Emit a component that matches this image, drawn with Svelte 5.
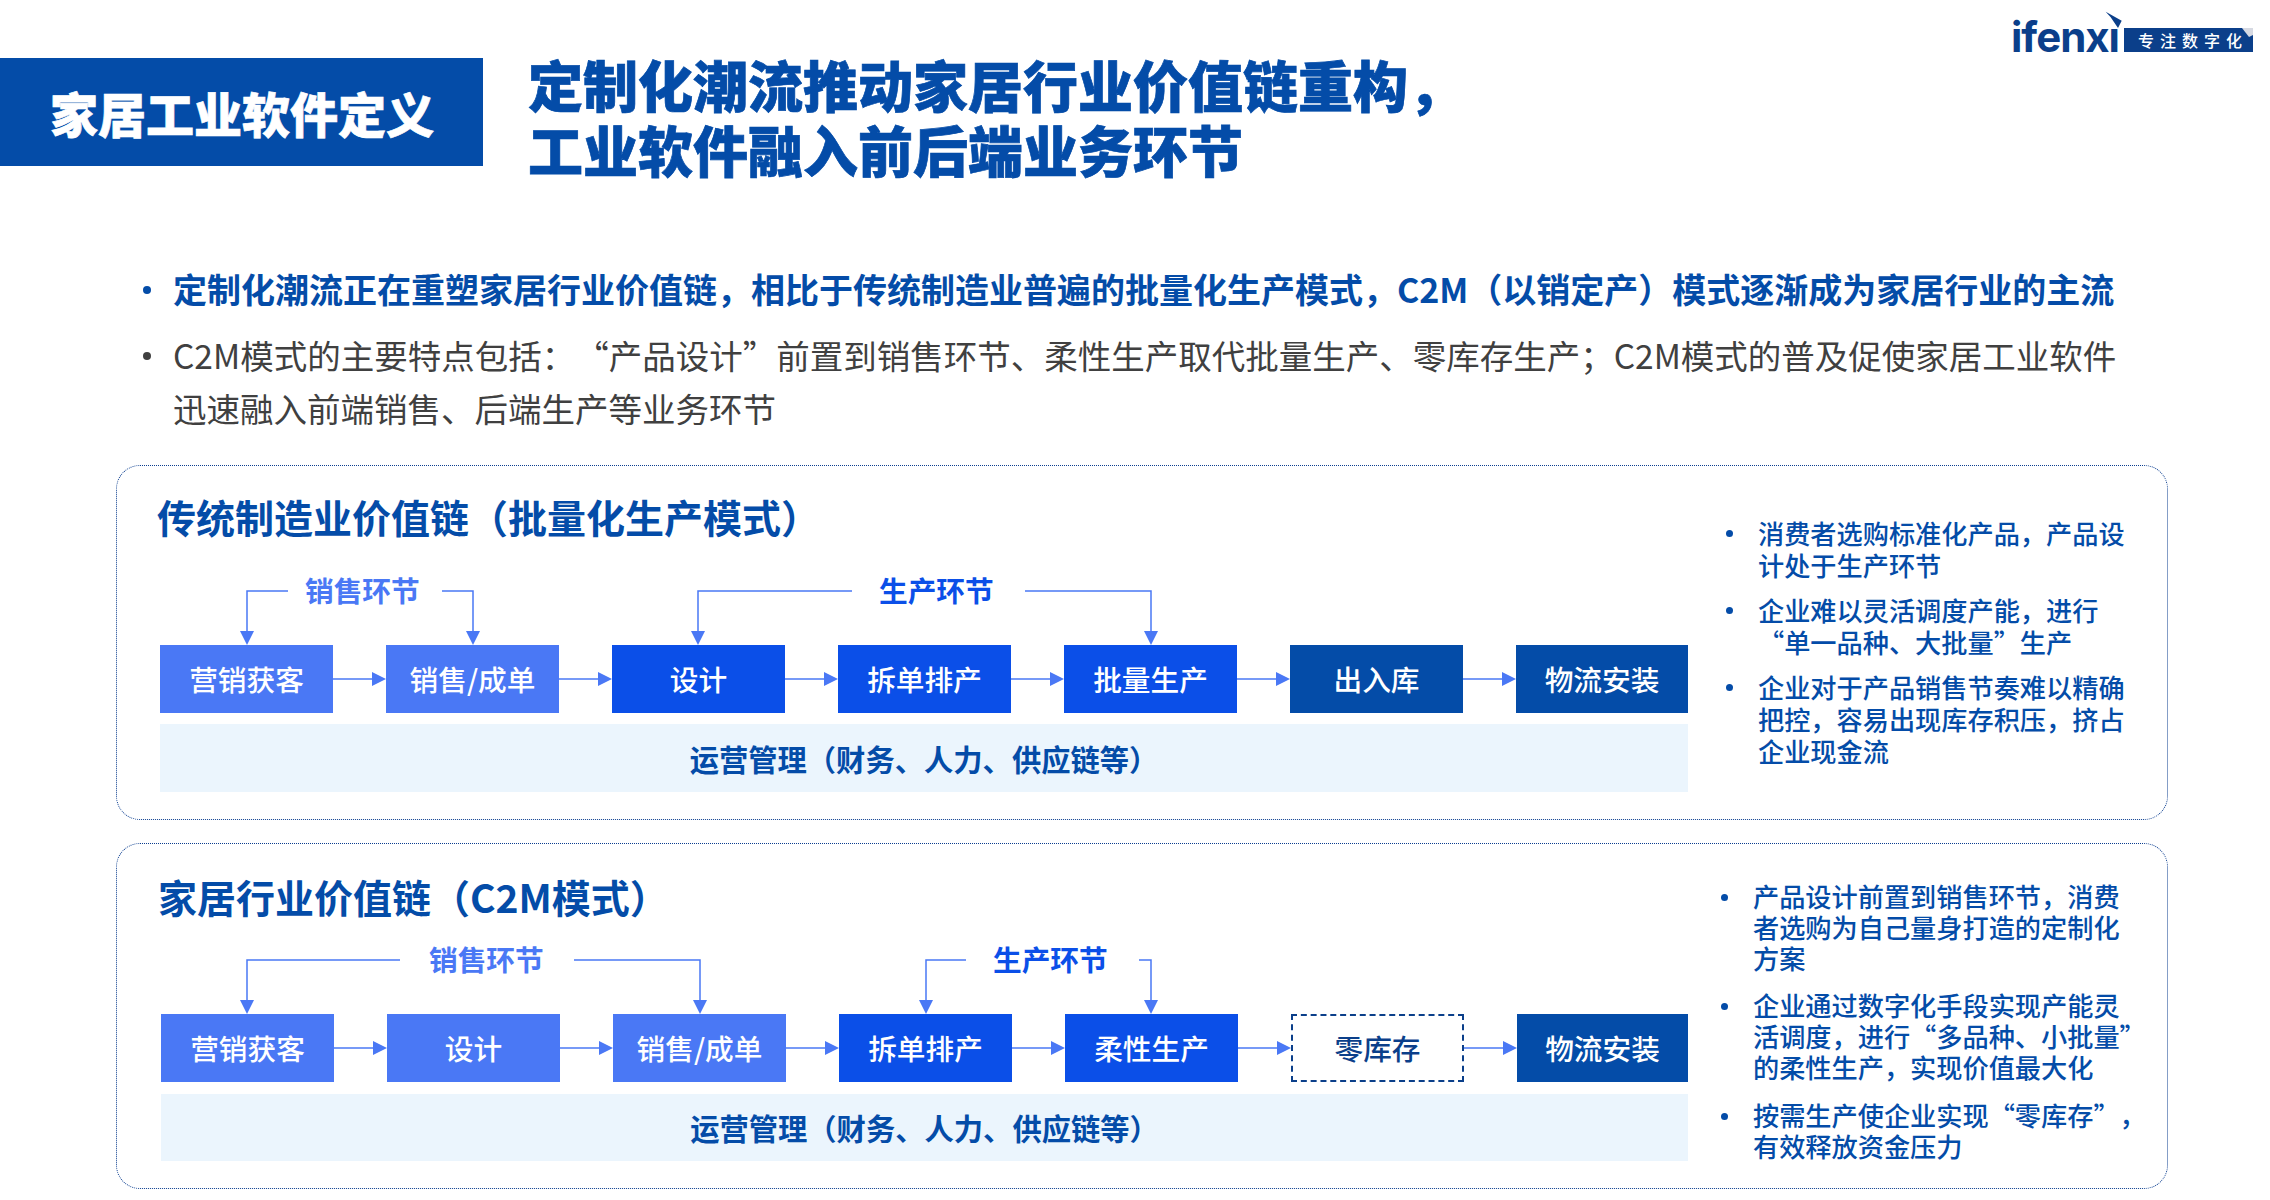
<script>
  const cards = [
    {
      cls: 'first',
      title: '传统制造业价值链（批量化生产模式）',
      w: 1528,
      brackets: [
        { path: 'M128 16H87V60 M282 16H313V60', tips: [87, 313], label: '销售环节', x: 145, cls: 'light' },
        { path: 'M692 16H538V60 M865 16H991V60', tips: [538, 991], label: '生产环节', x: 719, cls: 'mid' }
      ],
      boxes: [
        ['营销获客', 'light'], ['销售/成单', 'light'], ['设计', 'mid'], ['拆单排产', 'mid'],
        ['批量生产', 'mid'], ['出入库', 'dark'], ['物流安装', 'dark']
      ],
      notes: [
        ['消费者选购标准化产品，产品设', '计处于生产环节'],
        ['企业难以灵活调度产能，进行', '“单一品种、大批量”生产'],
        ['企业对于产品销售节奏难以精确', '把控，容易出现库存积压，挤占', '企业现金流']
      ]
    },
    {
      cls: 'second',
      title: '家居行业价值链（C2M模式）',
      w: 1527,
      brackets: [
        { path: 'M239 16H86V60 M413 16H539V60', tips: [86, 539], label: '销售环节', x: 268, cls: 'light' },
        { path: 'M805 16H765V60 M978 16H990V60', tips: [765, 990], label: '生产环节', x: 832, cls: 'mid' }
      ],
      boxes: [
        ['营销获客', 'light'], ['设计', 'light'], ['销售/成单', 'light'], ['拆单排产', 'mid'],
        ['柔性生产', 'mid'], ['零库存', 'dashed'], ['物流安装', 'dark']
      ],
      notes: [
        ['产品设计前置到销售环节，消费', '者选购为自己量身打造的定制化', '方案'],
        ['企业通过数字化手段实现产能灵', '活调度，进行“多品种、小批量”', '的柔性生产，实现价值最大化'],
        ['按需生产使企业实现“零库存”，', '有效释放资金压力']
      ]
    }
  ];
</script>

<div class="page">
  <header class="head">
    <div class="tag">家居工业软件定义</div>
    <h1 class="title">定制化潮流推动家居行业价值链重构，<br />工业软件融入前后端业务环节</h1>
    <svg class="logo" width="240" height="44" viewBox="0 0 240 44" aria-label="ifenxi 专注数字化">
      <text x="-2" y="42" class="logo-word" textLength="109" lengthAdjust="spacing">ifenxı</text>
      <polygon points="92.7,1.7 108.7,10.7 105,18 97.7,7.3" fill="#0b3f8a" />
      <rect x="111" y="18" width="129" height="24" fill="#0b3f8a" />
      <polygon points="229,18 240,18 240,25 236,27" fill="#d6d9e2" />
      <text x="125" y="37" class="logo-sub">专注数字化</text>
    </svg>
  </header>

  <ul class="points">
    <li class="strong">定制化潮流正在重塑家居行业价值链，相比于传统制造业普遍的批量化生产模式，C2M（以销定产）模式逐渐成为家居行业的主流</li>
    <li>C2M模式的主要特点包括：“产品设计”前置到销售环节、柔性生产取代批量生产、零库存生产；C2M模式的普及促使家居工业软件<br />迅速融入前端销售、后端生产等业务环节</li>
  </ul>

  {#each cards as card}
    <section class="card {card.cls}">
      <div class="chain">
        <h2>{card.title}</h2>
        <svg class="brackets" width={card.w} height="70" viewBox="0 0 {card.w} 70">
          {#each card.brackets as b}
            <path d={b.path} fill="none" stroke="#4a78f5" stroke-width="1.5" />
            {#each b.tips as t}
              <polygon points="{t - 7},56 {t + 7},56 {t},70" fill="#4a78f5" />
            {/each}
            <text x={b.x} y="27" class="bracket-label {b.cls}">{b.label}</text>
          {/each}
        </svg>
        <div class="flow">
          {#each card.boxes as box, i}
            {#if i > 0}
              <svg class="link" width="53" height="14" viewBox="0 0 53 14">
                <path d="M0 7H40" stroke="#4a78f5" stroke-width="1.5" />
                <polygon points="39,0 53,7 39,14" fill="#4a78f5" />
              </svg>
            {/if}
            <div class="box {box[1]}">{box[0]}</div>
          {/each}
        </div>
        <div class="ops">运营管理（财务、人力、供应链等）</div>
      </div>
      <ul class="notes">
        {#each card.notes as note}
          <li>{#each note as line}<span>{line}</span>{/each}</li>
        {/each}
      </ul>
    </section>
  {/each}
</div>

<style>
  :global(body) {
    margin: 0;
    background: #fff;
  }
  .page {
    width: 2270px;
    height: 1200px;
    overflow: hidden;
    background: #fff;
    font-family: "Noto Sans CJK SC", "Noto Sans", sans-serif;
    color: #044ca8;
    text-spacing-trim: space-all;
  }
  .head {
    display: flex;
    align-items: flex-start;
    height: 185px;
  }
  .tag {
    flex: 0 0 auto;
    box-sizing: border-box;
    width: 483px;
    height: 108px;
    margin-top: 58px;
    padding-left: 50px;
    background: #044ca8;
    color: #fff;
    font-size: 48px;
    font-weight: 900;
    line-height: 108px;
    -webkit-text-stroke: 0.7px #fff;
  }
  .title {
    margin: 51px 0 0 45px;
    color: #044ca8;
    font-size: 55px;
    font-weight: 900;
    line-height: 65px;
    -webkit-text-stroke: 0.7px #044ca8;
  }
  .logo {
    flex: 0 0 auto;
    margin: 10px 17px 0 auto;
    overflow: visible;
  }
  .logo-word {
    font-family: Inter, sans-serif;
    font-size: 42px;
    font-weight: 700;
    fill: #0b3f8a;
  }
  .logo-sub {
    font-size: 16px;
    font-weight: 500;
    letter-spacing: 6px;
    fill: #fff;
  }
  ul {
    list-style: none;
    margin: 0;
    padding: 0;
  }
  .points {
    margin: 77px 0 0 143px;
    width: 2020px;
    color: #404040;
    font-size: 33.5px;
    line-height: 53px;
  }
  .points li {
    position: relative;
    padding-left: 30px;
    margin-bottom: 13px;
    white-space: nowrap;
  }
  .points li::before {
    content: "";
    position: absolute;
    left: 0;
    top: 24px;
    width: 8px;
    height: 8px;
    border-radius: 50%;
    background: currentColor;
  }
  .points li.strong {
    color: #044ca8;
    font-size: 34px;
    font-weight: 700;
  }
  .card {
    box-sizing: border-box;
    display: flex;
    align-items: flex-start;
    width: 2052px;
    margin-left: 116px;
    border: 1px dotted #0a3d8f;
    border-radius: 24px;
  }
  .card.first {
    height: 355px;
    margin-top: 31px;
    padding: 25px 0 0 43px;
  }
  .card.second {
    height: 346px;
    margin-top: 23px;
    padding: 27px 0 0 44px;
  }
  h2 {
    margin: 0 0 0 -3px;
    color: #044ca8;
    font-size: 39px;
    font-weight: 700;
    line-height: 50px;
    white-space: nowrap;
  }
  .brackets {
    display: block;
    overflow: visible;
  }
  .first .brackets {
    margin-top: 34px;
  }
  .second .brackets {
    margin-top: 23px;
  }
  .bracket-label {
    font-size: 28.7px;
    font-weight: 700;
  }
  .bracket-label.light {
    fill: #4a78f5;
  }
  .bracket-label.mid {
    fill: #0b4fe8;
  }
  .flow {
    display: flex;
    align-items: center;
    height: 68px;
  }
  .link {
    flex: 0 0 53px;
  }
  .box {
    box-sizing: border-box;
    flex: 0 0 173px;
    height: 68px;
    color: #fff;
    font-size: 28.7px;
    font-weight: 500;
    line-height: 68px;
    text-align: center;
  }
  .box:last-child {
    flex: 1 1 0;
  }
  .box.light {
    background: #4a78f5;
  }
  .box.mid {
    background: #0b4fe8;
  }
  .box.dark {
    background: #044ca8;
  }
  .box.dashed {
    border: 2px dashed #0b3f8a;
    color: #0b3f8a;
    line-height: 64px;
  }
  .ops {
    background: #ebf5fd;
    color: #044ca8;
    font-size: 29.3px;
    font-weight: 700;
    text-align: center;
  }
  .first .ops {
    margin-top: 11px;
    height: 68px;
    line-height: 68px;
  }
  .second .ops {
    margin-top: 12px;
    height: 67px;
    line-height: 67px;
  }
  .notes {
    font-size: 26.2px;
    font-weight: 500;
    white-space: nowrap;
  }
  .notes li {
    position: relative;
    padding-left: 32px;
  }
  .notes li::before {
    content: "";
    position: absolute;
    left: 0;
    top: 13px;
    width: 7px;
    height: 7px;
    border-radius: 50%;
    background: currentColor;
  }
  .notes span {
    display: block;
  }
  .first .notes {
    margin: 26px 0 0 38px;
    line-height: 32px;
  }
  .first .notes li {
    margin-bottom: 13px;
  }
  .second .notes {
    margin: 9.5px 0 0 33px;
    line-height: 31px;
  }
  .second .notes li {
    margin-bottom: 16.5px;
  }
</style>
